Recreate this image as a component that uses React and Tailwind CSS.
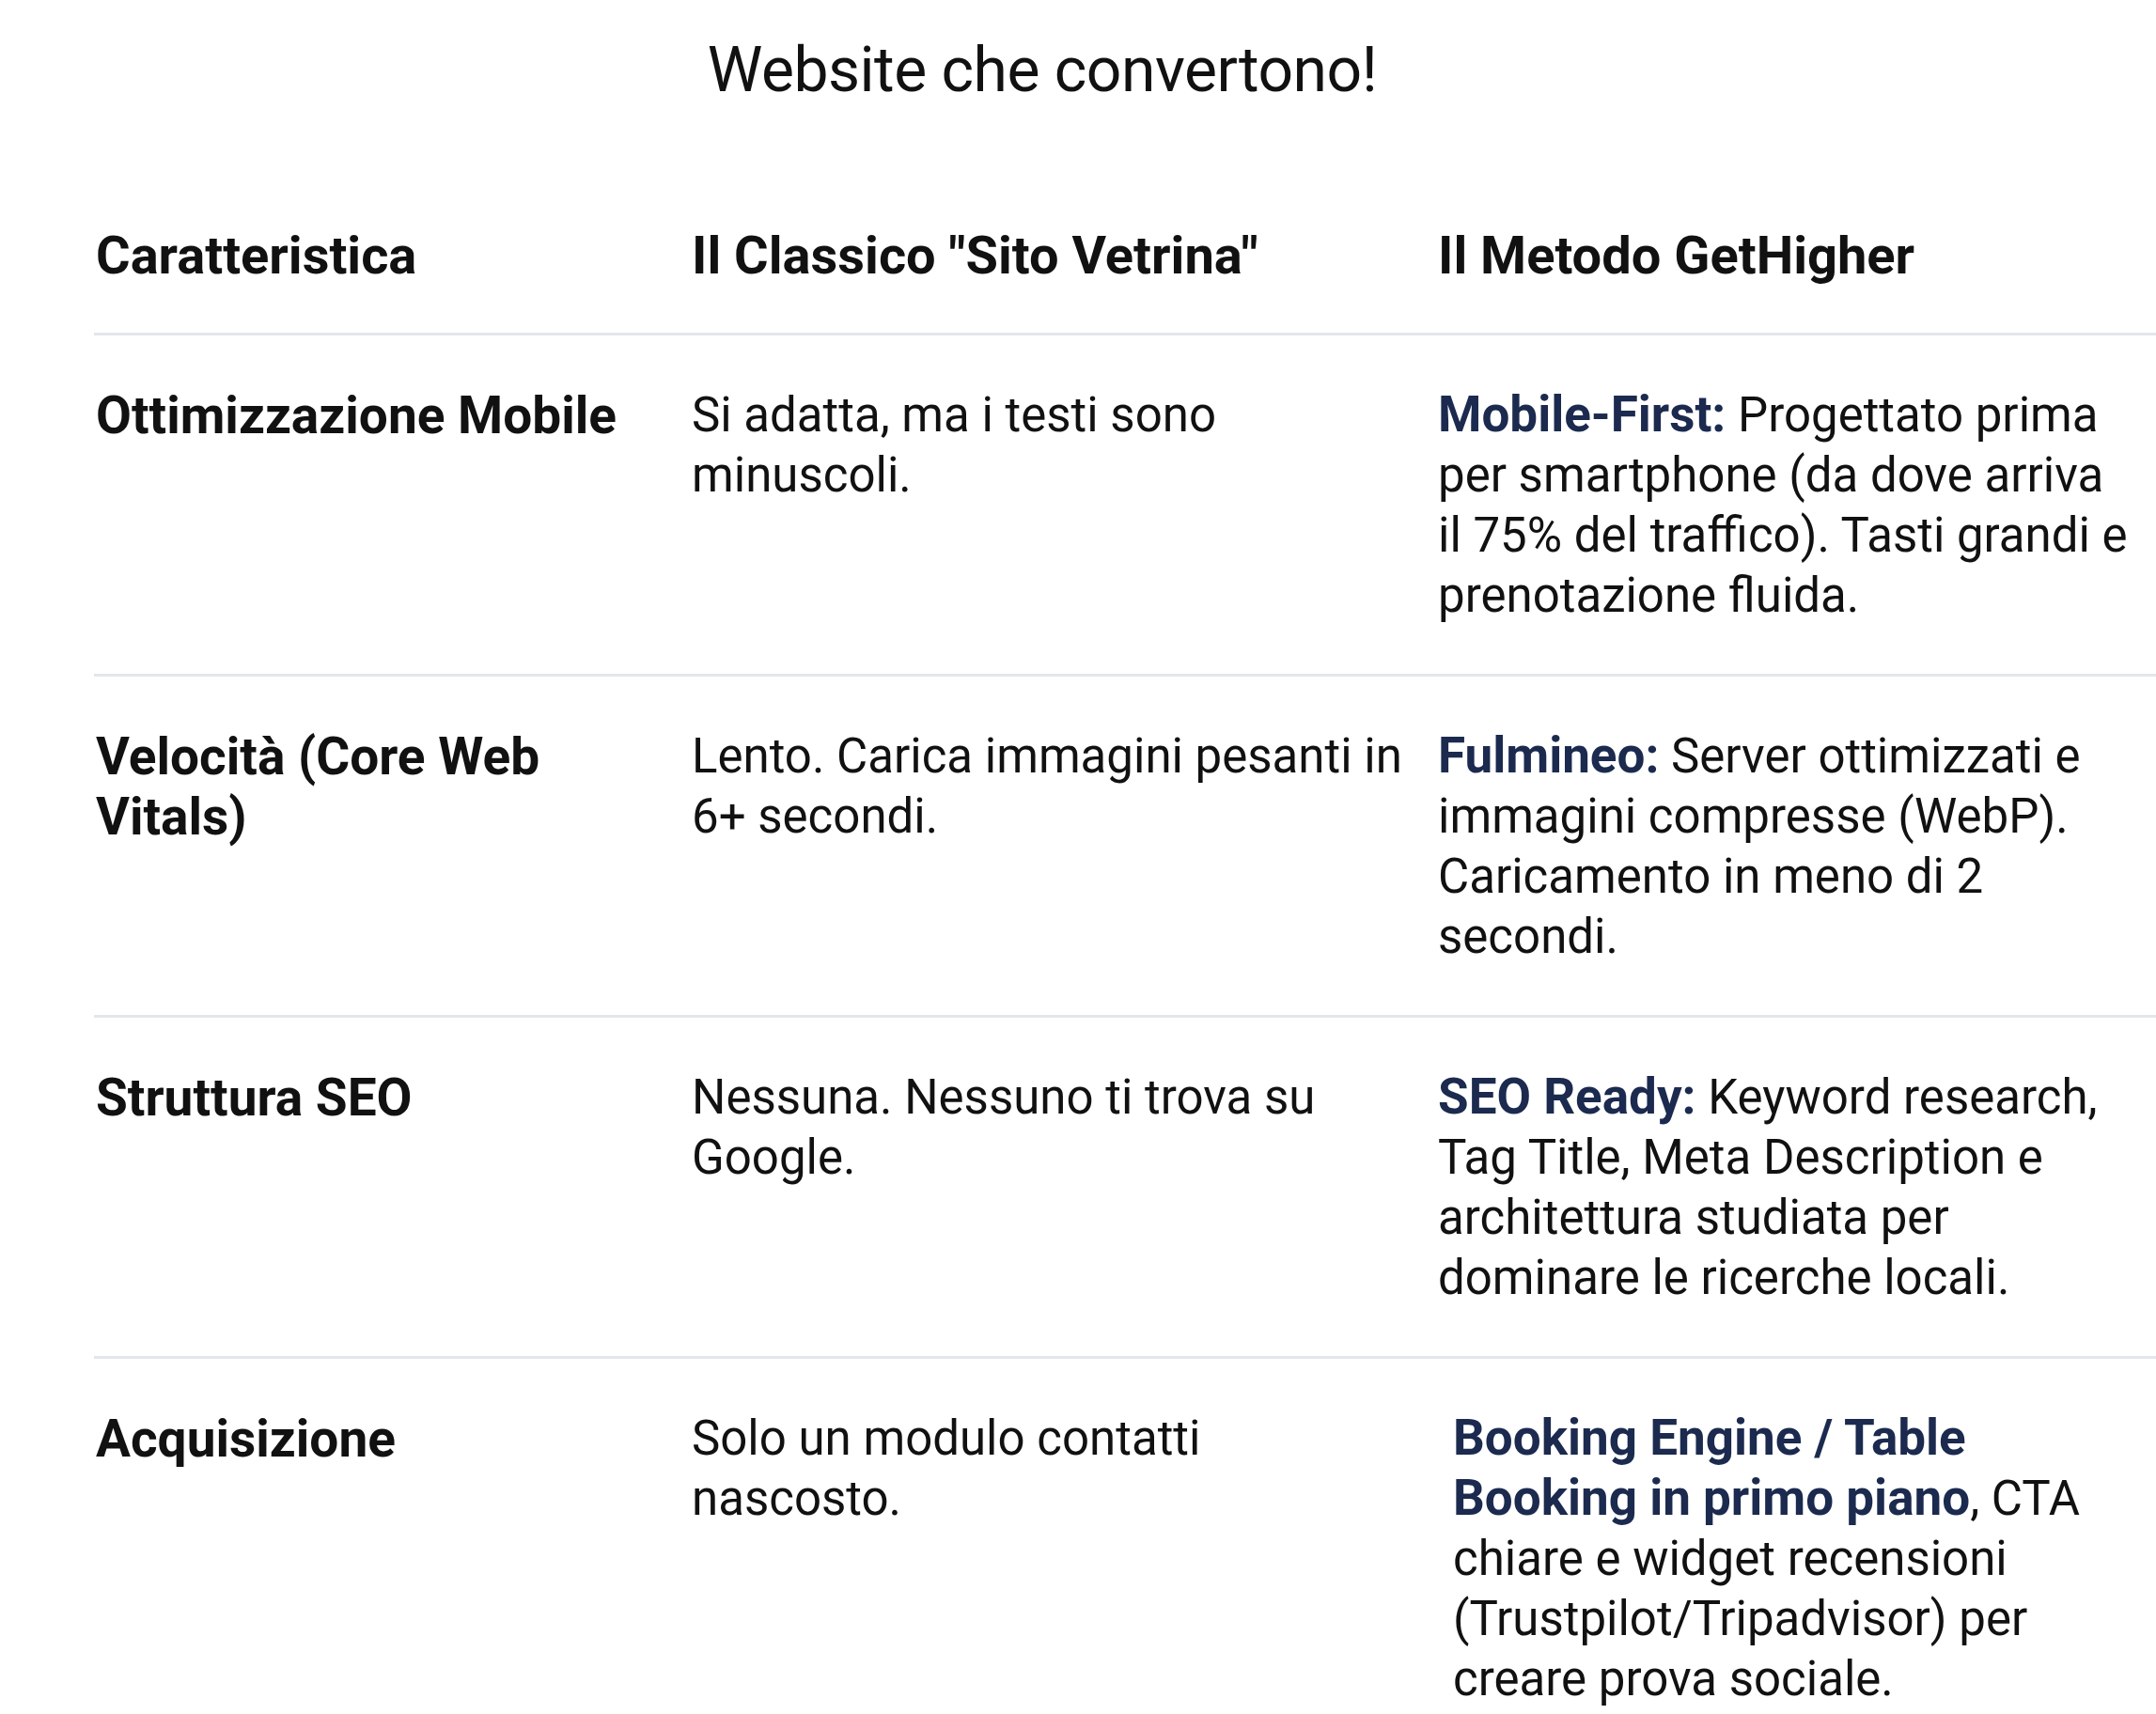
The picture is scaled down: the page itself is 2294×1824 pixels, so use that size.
import React from 'react';

// terza colonna: righe spezzate a mano come nell'originale
const rows = [
  {
    feature: 'Ottimizzazione Mobile',
    classic: 'Si adatta, ma i testi sono minuscoli.',
    label: ['Mobile-First:'],
    method: [' Progettato prima', 'per smartphone (da dove arriva', 'il 75% del traffico). Tasti grandi e', 'prenotazione fluida.'],
  },
  {
    feature: 'Velocità (Core Web Vitals)',
    classic: 'Lento. Carica immagini pesanti in 6+ secondi.',
    label: ['Fulmineo:'],
    method: [' Server ottimizzati e', 'immagini compresse (WebP).', 'Caricamento in meno di 2', 'secondi.'],
  },
  {
    feature: 'Struttura SEO',
    classic: 'Nessuna. Nessuno ti trova su Google.',
    label: ['SEO Ready:'],
    method: [' Keyword research,', 'Tag Title, Meta Description e', 'architettura studiata per', 'dominare le ricerche locali.'],
  },
  {
    feature: 'Acquisizione',
    classic: 'Solo un modulo contatti nascosto.',
    label: ['Booking Engine / Table', 'Booking in primo piano'],
    method: [', CTA', 'chiare e widget recensioni', '(Trustpilot/Tripadvisor) per', 'creare prova sociale.'],
    indent: true,
  },
];

function MethodCell({ label, method }) {
  const out = [];
  label.forEach((l, i) => {
    if (i > 0) out.push(<br key={`lb${i}`} />);
    out.push(
      <span key={`l${i}`} className="font-bold text-[53px] leading-[56px] text-[#1b2a4e]">
        {l}
      </span>
    );
  });
  method.forEach((m, i) => {
    if (i > 0) out.push(<br key={`mb${i}`} />);
    out.push(<span key={`m${i}`}>{m}</span>);
  });
  return out;
}

export default function App() {
  return (
    <div className="min-h-screen bg-white text-[#111111] font-['Roboto','Liberation_Sans',sans-serif] overflow-hidden">
      <div className="w-[2218px] flex justify-center pt-[36px]">
        <h1 className="text-[66px] leading-[78px] font-normal tracking-[-0.5px]">Website che convertono!</h1>
      </div>

      <div className="pl-[100px] pt-[126px]">
        <div className="w-[2194px]">
          <div className="grid grid-cols-[636px_794px_1fr] border-b-[3px] border-[#e3e6ec] pb-[50px] text-[56px] leading-[64px] font-bold">
            <div className="pl-[2px]">Caratteristica</div>
            <div>Il Classico "Sito Vetrina"</div>
            <div>Il Metodo GetHigher</div>
          </div>

          {rows.map((row) => (
            <div
              key={row.feature}
              className="grid grid-cols-[636px_794px_1fr] border-b-[3px] border-[#e3e6ec] pt-[53px] pb-[51px] leading-[64px]"
            >
              <div className="pl-[2px] pr-[30px] text-[55px] font-bold">{row.feature}</div>
              <div className="pr-[32px] text-[51px]">{row.classic}</div>
              <div className={`text-[51px] whitespace-nowrap ${row.indent ? 'pl-[16px]' : ''}`}>
                <MethodCell label={row.label} method={row.method} />
              </div>
            </div>
          ))}
        </div>
      </div>
    </div>
  );
}
